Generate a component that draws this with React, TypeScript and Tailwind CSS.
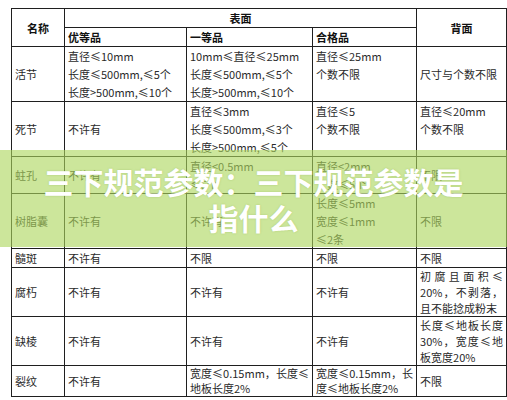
import React from "react";

const td = "border border-[#1f1f1f] px-[3px] align-middle";
const th = "border border-[#1f1f1f] px-[3px] font-bold text-[#111]";
const just = "text-justify [text-align-last:justify]";

const Lines = ({ items }: { items: string[] }) => (
  <>
    {items.map((t, i) => (
      <div key={i}>{t}</div>
    ))}
  </>
);

const App = () => {
  return (
    <div
      className="relative w-[507px] h-[400px] overflow-hidden bg-white pt-[8px] pl-[11px] text-[11px] leading-[18px] text-[#2a2a2a]"
      style={{ fontFamily: '"Noto Sans CJK SC", "Noto Sans", sans-serif' }}
    >
      <table className="table-fixed border-collapse w-[495px]">
        <colgroup>
          <col className="w-[53px]" />
          <col className="w-[122px]" />
          <col className="w-[126px]" />
          <col className="w-[104px]" />
          <col className="w-[90px]" />
        </colgroup>
        <tbody>
          {/* header */}
          <tr className="h-[18px]">
            <th rowSpan={2} className={`${th} text-center`}>
              名称
            </th>
            <th colSpan={3} className={`${th} text-center`}>
              表面
            </th>
            <th rowSpan={2} className={`${th} text-center`}>
              背面
            </th>
          </tr>
          <tr className="h-[18px]">
            <th className={`${th} text-left`}>优等品</th>
            <th className={`${th} text-left`}>一等品</th>
            <th className={`${th} text-left`}>合格品</th>
          </tr>

          {/* 活节 */}
          <tr className="h-[54px]">
            <td className={td}>活节</td>
            <td className={td}>
              <Lines items={["直径≤10mm", "长度≤500mm,≤5个", "长度>500mm,≤10个"]} />
            </td>
            <td className={td}>
              <Lines items={["10mm≤直径≤25mm", "长度≤500mm,≤5个", "长度>500mm,≤10个"]} />
            </td>
            <td className={`${td} align-top`}>
              <Lines items={["直径≤25mm", "个数不限"]} />
            </td>
            <td className={td}>尺寸与个数不限</td>
          </tr>

          {/* 死节 */}
          <tr className="h-[55px]">
            <td className={td}>死节</td>
            <td className={td}>不许有</td>
            <td className={td}>
              <Lines items={["直径≤3mm", "长度≤500mm,≤3个", "长度>500mm,≤5个"]} />
            </td>
            <td className={`${td} align-top`}>
              <Lines items={["直径≤5", "个数不限"]} />
            </td>
            <td className={`${td} align-top`}>
              <Lines items={["直径≤20mm", "个数不限"]} />
            </td>
          </tr>

          {/* 蛀孔 */}
          <tr className="h-[36px]">
            <td className={td}>蛀孔</td>
            <td className={td}>不许有</td>
            <td className={td}>
              <Lines items={["直径<0.5mm", "≤5个"]} />
            </td>
            <td className={td}>
              <Lines items={["直径<2mm", "个数≤5个"]} />
            </td>
            <td className={td}>不限</td>
          </tr>

          {/* 树脂囊 */}
          <tr className="h-[55px]">
            <td className={td}>树脂囊</td>
            <td className={td}>不许有</td>
            <td className={td}>不许有</td>
            <td className={td}>
              <Lines items={["长度≤5mm", "宽度≤1mm", "≤2条"]} />
            </td>
            <td className={td}>不限</td>
          </tr>

          {/* 髓斑 */}
          <tr className="h-[19px]">
            <td className={td}>髓斑</td>
            <td className={td}>不许有</td>
            <td className={td}>不限</td>
            <td className={td}>不限</td>
            <td className={td}>不限</td>
          </tr>

          {/* 腐朽 */}
          <tr className="h-[48px]">
            <td className={td}>腐朽</td>
            <td className={td}>不许有</td>
            <td className={td}>不许有</td>
            <td className={td}>不许有</td>
            <td className={`${td} leading-[16px]`}>
              <div className={just}>初腐且面积≤</div>
              <div className={just}>20%，不剥落，</div>
              <div>且不能捻成粉末</div>
            </td>
          </tr>

          {/* 缺棱 */}
          <tr className="h-[49px]">
            <td className={td}>缺棱</td>
            <td className={td}>不许有</td>
            <td className={td}>不许有</td>
            <td className={td}>不许有</td>
            <td className={`${td} leading-[16px]`}>
              <div className={just}>长度≤地板长度</div>
              <div className={just}>30%，宽度≤地</div>
              <div>板宽度20%</div>
            </td>
          </tr>

          {/* 裂纹 */}
          <tr className="h-[31px]">
            <td className={td}>裂纹</td>
            <td className={td}>不许有</td>
            <td className={`${td} leading-[15px]`}>
              <div className={just}>宽度≤0.15mm，长度≤</div>
              <div>地板长度2%</div>
            </td>
            <td className={`${td} leading-[15px]`}>
              <div className={just}>宽度≤0.15mm，长</div>
              <div>度≤地板长度2%</div>
            </td>
            <td className={td}>不限</td>
          </tr>
        </tbody>
      </table>

      {/* title banner over the table */}
      <div className="absolute left-0 top-[150px] w-full h-[97px] bg-[rgba(172,214,94,0.62)] flex items-center justify-center">
        <h1 className="text-center text-white font-bold text-[30px] leading-[36px] [text-shadow:0_0_2px_rgba(120,160,60,0.4)]">
          三下规范参数<span className="inline-block w-[1em] text-left">：</span>三下规范参数是
          <br />
          指什么
        </h1>
      </div>
    </div>
  );
};

export default App;
